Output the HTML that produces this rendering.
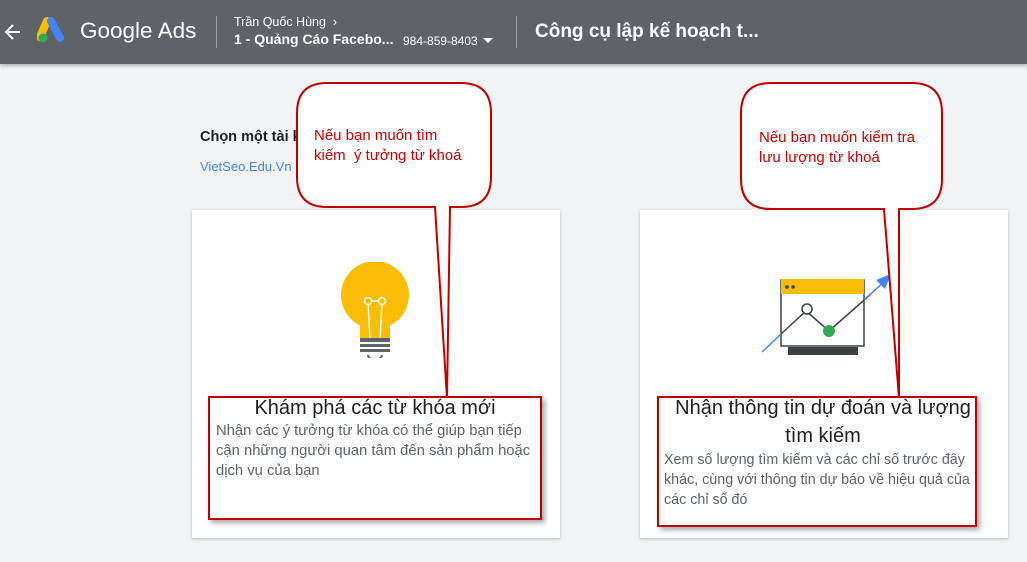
<!DOCTYPE html>
<html><head><meta charset="utf-8"><style>
body{margin:0;width:1027px;height:562px;background:#f1f3f4;font-family:"Liberation Sans",sans-serif;position:relative;overflow:hidden}
.hdr{position:absolute;left:0;top:0;width:1027px;height:64px;background:#5f6368;box-shadow:0 2px 3px rgba(0,0,0,.25)}
.w{color:#fff;position:absolute;white-space:nowrap}
.sep{position:absolute;top:16px;width:1px;height:32px;background:#9aa0a6}
.card{position:absolute;top:210px;width:368px;height:328px;background:#fff;box-shadow:0 1px 3px rgba(0,0,0,.25)}
.rb{position:absolute;border:2px solid #c00000;box-shadow:3px 3px 5px rgba(0,0,0,.35)}
.t{position:absolute;font-size:20px;color:#202124;text-align:center;line-height:28px}
.d{position:absolute;font-size:14.8px;color:#5f6368;line-height:20px}
.bt{position:absolute;color:#cc0000;font-size:15px;line-height:20px}
</style></head><body>
<div class="hdr">
<svg style="position:absolute;left:4px;top:22px" width="18" height="20" viewBox="0 0 18 20"><path d="M16 10H3M9 3L2 10l7 7" stroke="#fff" stroke-width="2" fill="none"/></svg>
<svg style="position:absolute;left:37px;top:17px" width="30" height="28" viewBox="0 0 30 28"><path d="M10 4L3 20" stroke="#fbbc04" stroke-width="8" stroke-linecap="round"/><path d="M14 4l9 17" stroke="#4285f4" stroke-width="8" stroke-linecap="round"/><circle cx="6" cy="21" r="4.5" fill="#34a853"/></svg>
<div class="w" style="left:80px;top:18px;font-size:22.5px">Google Ads</div>
<div class="sep" style="left:216px"></div>
<div class="w" style="left:234px;top:15px;font-size:12.5px">Trần Quốc Hùng &nbsp;›</div>
<div class="w" style="left:234px;top:31px;font-size:14px;font-weight:bold">1 - Quảng Cáo Facebo...</div>
<div class="w" style="left:403px;top:34px;font-size:12px">984-859-8403</div>
<div style="position:absolute;left:483px;top:38px;border:5px solid transparent;border-top:5px solid #fff"></div>
<div class="sep" style="left:516px"></div>
<div class="w" style="left:535px;top:21px;font-size:19px;font-weight:bold">Công cụ lập kế hoạch t...</div>
</div>
<div style="position:absolute;left:200px;top:129px;font-size:14.5px;font-weight:bold;color:#202124">Chọn một tài k</div>
<div style="position:absolute;left:200px;top:159px;font-size:13px;color:#4285f4">VietSeo.Edu.Vn</div>

<div class="card" style="left:192px">
<svg style="position:absolute;left:148px;top:52px" width="70" height="96" viewBox="0 0 70 96"><circle cx="35" cy="33" r="34" fill="#fbbc04"/><rect x="20" y="56" width="30" height="20" fill="#fbbc04"/><rect x="20" y="76" width="30" height="14" fill="#5f6368"/><rect x="20" y="80" width="30" height="2" fill="#fff"/><rect x="20" y="85" width="30" height="2" fill="#fff"/><path d="M28 93a6 4 0 0 0 14 0" fill="none" stroke="#5f6368" stroke-width="2"/><path d="M30 76L28 42M40 76L42 42" stroke="#fff" stroke-width="1.5"/><circle cx="28" cy="39" r="3.5" fill="none" stroke="#fff" stroke-width="1.5"/><circle cx="42" cy="39" r="3.5" fill="none" stroke="#fff" stroke-width="1.5"/><path d="M31 39h8" stroke="#fff" stroke-width="1.5"/></svg>
</div>
<div class="card" style="left:640px">
<svg style="position:absolute;left:120px;top:60px" width="134" height="88" viewBox="0 0 134 88"><rect x="21" y="10" width="83" height="66" fill="#fff" stroke="#3c4043" stroke-width="1.5"/><rect x="21" y="9" width="83" height="15" fill="#fbbc04"/><circle cx="27" cy="17" r="1.8" fill="#3c4043"/><circle cx="33" cy="17" r="1.8" fill="#3c4043"/><rect x="28" y="77" width="70" height="8" fill="#3c4043"/><path d="M2 82L21 64" stroke="#4285f4" stroke-width="1.5"/><path d="M21 64L46 41l23 20 42-37" stroke="#3c4043" stroke-width="1.5" fill="none"/><path d="M104 30l22-20" stroke="#4285f4" stroke-width="1.5"/><path d="M116 10l15-6-6 15z" fill="#4285f4"/><circle cx="47" cy="39" r="5" fill="#fff" stroke="#3c4043" stroke-width="1.5"/><circle cx="69" cy="61" r="6" fill="#34a853"/></svg>
</div>

<div class="rb" style="left:208px;top:396px;width:330px;height:120px"></div>
<div class="t" style="left:210px;top:394px;width:330px">Khám phá các từ khóa mới</div>
<div class="d" style="left:216px;top:421px;width:320px">Nhận các ý tưởng từ khóa có thể giúp bạn tiếp cận những người quan tâm đến sản phẩm hoặc dịch vụ của bạn</div>

<div class="rb" style="left:657px;top:396px;width:316px;height:127px"></div>
<div class="t" style="left:668px;top:394px;width:310px">Nhận thông tin dự đoán và lượng tìm kiếm</div>
<div class="d" style="left:664px;top:450px;width:312px;font-size:14.3px">Xem số lượng tìm kiếm và các chỉ số trước đây khác, cùng với thông tin dự báo về hiệu quả của các chỉ số đó</div>

<svg style="position:absolute;left:0;top:0" width="1027" height="562">
<path d="M327 83H461Q491 83 491 113V177Q491 207 461 207H450L447 398L435 207H327Q297 207 297 177V113Q297 83 327 83Z" fill="#fff" stroke="#c00000" stroke-width="2"/>
<path d="M771 83H912Q942 83 942 113V179Q942 209 912 209H899L899 398L884 209H771Q741 209 741 179V113Q741 83 771 83Z" fill="#fff" stroke="#c00000" stroke-width="2"/>
</svg>
<div class="bt" style="left:314px;top:126px">Nếu bạn muốn tìm<br>kiếm &nbsp;ý tưởng từ khoá</div>
<div class="bt" style="left:759px;top:128px">Nếu bạn muốn kiểm tra<br>lưu lượng từ khoá</div>
</body></html>
